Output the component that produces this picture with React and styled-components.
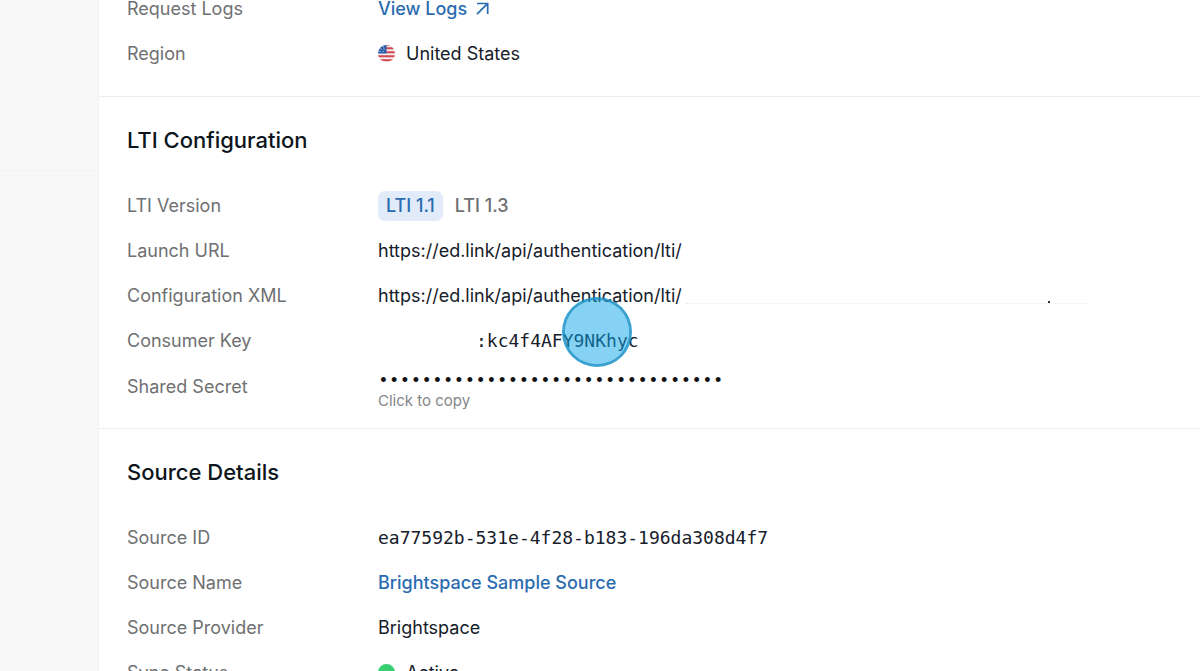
import React from 'react'
import styled, { createGlobalStyle } from 'styled-components'


const GlobalStyle = createGlobalStyle`
    * {
        box-sizing: border-box;
    }

    body {
        margin: 0;
        background-color: #fff;
        color: #16202a;
        font-family: Inter, "Liberation Sans", sans-serif;
        font-size: 18px;
        line-height: 24px;
    }
`

const Page = styled.div`
    display: flex;
    height: 100vh;
    overflow: hidden;
`

const SideBar = styled.aside`
    flex: 0 0 99px;
    background-color: #f8f8f8;
    border-right: 1px solid #f4f4f4;
`

const SideBlock = styled.div`
    height: 171px;
    border-bottom: 1px solid #f3f3f3;
`

/* the panel is scrolled part of the way down its first section */
const Content = styled.main`
    flex: 1;
    min-width: 0;
    margin-top: -14px;
`

const Section = styled.section`
    padding: ${props => props.$first ? '0 28px 20px' : '28px 28px 20px'};
    border-bottom: 1px solid #ededee;
`

const Title = styled.h2`
    margin: 0 0 28px;
    font-size: 22px;
    font-weight: 500;
    line-height: 30px;
    color: #0c151c;
`

const List = styled.dl`
    margin: 0;
`

const Row = styled.div`
    display: grid;
    grid-template-columns: 251px 1fr;
    align-items: center;
    height: 45px;
`

const Label = styled.dt`
    color: #6f7072;
`

const Value = styled.dd`
    position: relative;
    display: flex;
    align-items: center;
    gap: ${props => props.$gap || 0}px;
    margin: 0;
    white-space: nowrap;
`

const BlueLink = styled.a`
    display: flex;
    align-items: center;
    gap: 9px;
    color: #2b6cb0;
    font-weight: 500;
    text-decoration: none;
`

const Tab = styled.button`
    height: 30px;
    padding: 0 8px;
    border: 0;
    border-radius: 7px;
    font: inherit;
    font-weight: 500;
    cursor: pointer;
    background-color: ${props => props.$active ? '#e1ebf9' : 'transparent'};
    color: ${props => props.$active ? '#2b6cb0' : '#6f7072'};
`

const Mono = styled.span`
    font-family: "DejaVu Sans Mono", "Liberation Mono", monospace;
    font-size: 18px;
`

const KeyText = styled(Mono)`
    padding-left: 98px;
`

const Masked = styled.span`
    display: flex;
    align-items: flex-end;
    flex: 0 1 402px;
    height: 16px;
    margin-left: 4px;
    padding-right: 38px;
    justify-content: flex-end;
    border-bottom: 1px dotted #ececec;
`

const Speck = styled.span`
    width: 2px;
    height: 2px;
    background-color: #2a3138;
`

const CopyButton = styled.button`
    display: flex;
    flex-direction: column;
    align-items: flex-start;
    padding: 8px 0 0;
    border: 0;
    background: none;
    color: inherit;
    cursor: pointer;
`

const Dots = styled.span`
    font-family: "Liberation Mono", monospace;
    font-size: 18px;
    line-height: 20px;
    color: #111;
`

const Hint = styled.span`
    font-family: Inter, "Liberation Sans", sans-serif;
    font-size: 15px;
    line-height: 20px;
    color: #858688;
`

const ClickMarker = styled.span`
    position: absolute;
    left: 184px;
    top: -32px;
    width: 70px;
    height: 70px;
    border: 3px solid rgba(22, 146, 200, 0.85);
    border-radius: 50%;
    background-color: rgba(14, 165, 233, 0.5);
    background-clip: padding-box;
`

const StatusDot = styled.span`
    width: 17px;
    height: 17px;
    border-radius: 50%;
    background-color: #38cf74;
`


const ArrowIcon = () => (
    <svg width="13" height="13" viewBox="0 0 13 13" fill="none" stroke="currentColor" strokeWidth="1.7" aria-hidden="true">
        <path d="M1 1.5H11.7V12M11.5 1.7L1 12.2" />
    </svg>
)

const FlagIcon = () => (
    <svg width="17" height="17" viewBox="0 0 17 17" aria-hidden="true">
        <clipPath id="round"><circle cx="8.5" cy="8.5" r="8.5" /></clipPath>
        <g clipPath="url(#round)">
            <rect width="17" height="17" fill="#f5eeee" />
            <path d="M8 3.2H17M8 7.2H17M0 11.2H17M0 15.3H17" stroke="#d4454d" strokeWidth="2" />
            <path d="M8 0H17" stroke="#d4454d" strokeWidth="1.4" />
            <rect width="8.5" height="8.5" fill="#2d5da8" />
            <path d="M5 1.8h1M2.5 4h1M5.5 4h1M1.5 6.5h1M4.5 6.5h1" stroke="#dfe8f5" strokeWidth="1" />
        </g>
    </svg>
)

const Field = ({ label, gap, children }) => (
    <Row>
        <Label>{label}</Label>
        <Value $gap={gap}>{children}</Value>
    </Row>
)


function App() {
    return (
        <Page>
            <GlobalStyle />
            <SideBar>
                <SideBlock />
            </SideBar>
            <Content>
                <Section $first>
                    <List>
                        <Field label="Request Logs">
                            <BlueLink href="#logs">View Logs <ArrowIcon /></BlueLink>
                        </Field>
                        <Field label="Region" gap={11}><FlagIcon />United States</Field>
                    </List>
                </Section>

                <Section>
                    <Title>LTI Configuration</Title>
                    <List>
                        <Field label="LTI Version" gap={4}>
                            <Tab type="button" $active>LTI 1.1</Tab>
                            <Tab type="button">LTI 1.3</Tab>
                        </Field>
                        <Field label="Launch URL">https://ed.link/api/authentication/lti/</Field>
                        <Field label="Configuration XML">
                            https://ed.link/api/authentication/lti/
                            <Masked><Speck /></Masked>
                        </Field>
                        <Field label="Consumer Key">
                            <KeyText>:kc4f4AFY9NKhyc</KeyText>
                            <ClickMarker />
                        </Field>
                        <Field label="Shared Secret">
                            <CopyButton type="button">
                                <Dots>{'•'.repeat(32)}</Dots>
                                <Hint>Click to copy</Hint>
                            </CopyButton>
                        </Field>
                    </List>
                </Section>

                <Section>
                    <Title>Source Details</Title>
                    <List>
                        <Field label="Source ID"><Mono>ea77592b-531e-4f28-b183-196da308d4f7</Mono></Field>
                        <Field label="Source Name">
                            <BlueLink href="#source">Brightspace Sample Source</BlueLink>
                        </Field>
                        <Field label="Source Provider">Brightspace</Field>
                        <Field label="Sync Status" gap={11}><StatusDot />Active</Field>
                    </List>
                </Section>
            </Content>
        </Page>
    )
}

export default App
